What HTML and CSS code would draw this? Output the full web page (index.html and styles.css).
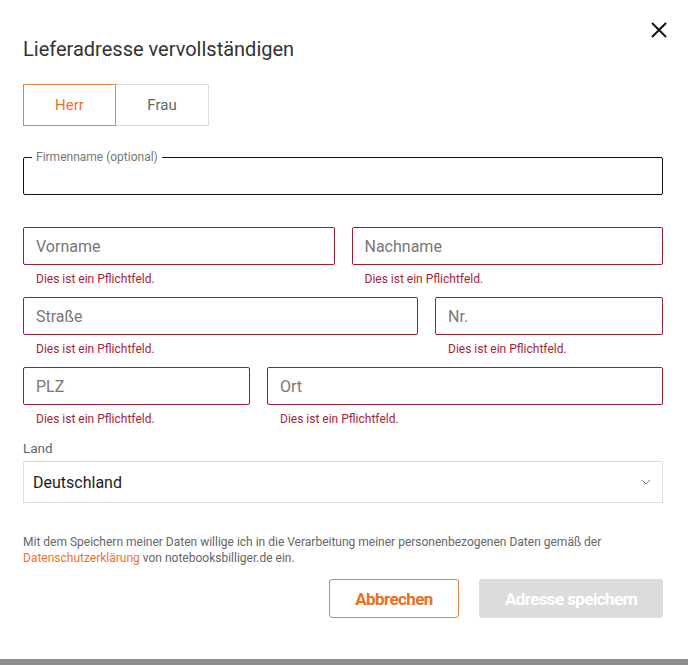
FILE: index.html
```html
<!DOCTYPE html>
<html lang="de">
<head>
    <meta charset="UTF-8">
    <title>Lieferadresse vervollständigen</title>
    <link rel="stylesheet" href="styles.css">
</head>
<body>
    <div class="modal">
        <div class="modal-head">
            <h2 class="modal-title">Lieferadresse vervollständigen</h2>
            <button class="close" type="button" aria-label="Schließen">
                <svg width="18" height="18" viewBox="0 0 18 18"><path d="M2 2L16 16M16 2L2 16" stroke="#111" stroke-width="2" fill="none"/></svg>
            </button>
        </div>

        <div class="salutation">
            <button type="button" class="sal active">Herr</button>
            <button type="button" class="sal">Frau</button>
        </div>

        <fieldset class="outlined">
            <legend>Firmenname (optional)</legend>
            <input type="text" name="company">
        </fieldset>

        <div class="row">
            <div class="field">
                <input type="text" class="invalid" placeholder="Vorname">
                <div class="error">Dies ist ein Pflichtfeld.</div>
            </div>
            <div class="field">
                <input type="text" class="invalid" placeholder="Nachname">
                <div class="error">Dies ist ein Pflichtfeld.</div>
            </div>
        </div>

        <div class="row street">
            <div class="field">
                <input type="text" class="invalid" placeholder="Straße">
                <div class="error">Dies ist ein Pflichtfeld.</div>
            </div>
            <div class="field">
                <input type="text" class="invalid" placeholder="Nr.">
                <div class="error">Dies ist ein Pflichtfeld.</div>
            </div>
        </div>

        <div class="row city">
            <div class="field">
                <input type="text" class="invalid" placeholder="PLZ">
                <div class="error">Dies ist ein Pflichtfeld.</div>
            </div>
            <div class="field">
                <input type="text" class="invalid" placeholder="Ort">
                <div class="error">Dies ist ein Pflichtfeld.</div>
            </div>
        </div>

        <label class="label" for="country">Land</label>
        <div class="select">
            <span>Deutschland</span>
            <svg width="10" height="6" viewBox="0 0 10 6"><path d="M1 1L5 5L9 1" stroke="#777" stroke-width="1" fill="none"/></svg>
        </div>

        <p class="consent">Mit dem Speichern meiner Daten willige ich in die Verarbeitung meiner personenbezogenen Daten gemäß der <a href="#">Datenschutzerklärung</a> von notebooksbilliger.de ein.</p>

        <div class="actions">
            <button type="button" class="btn btn-outline">Abbrechen</button>
            <button type="button" class="btn btn-disabled">Adresse speichern</button>
        </div>
    </div>
    <div class="bottom-bar"></div>
</body>
</html>
```

FILE: styles.css
```css
body {
    margin: 0;
    font-family: Roboto, "Liberation Sans", sans-serif;
    color: #333;
    background-color: #fff;
}
.modal {
    height: 659px;
    box-sizing: border-box;
    padding: 0 25px 0 23px;
}
.modal-head {
    display: flex;
    justify-content: space-between;
    align-items: flex-start;
}
.modal-title {
    margin: 37px 0 0 0;
    font-size: 20px;
    font-weight: 400;
    line-height: 24px;
    color: #333;
}
.close {
    margin: 21px -5px 0 0;
    padding: 0;
    border: none;
    background: none;
    cursor: pointer;
}
.salutation {
    display: flex;
    margin-top: 23px;
}
.sal {
    width: 93px;
    height: 42px;
    border: 1px solid #ddd;
    background: #fff;
    font-family: inherit;
    font-size: 15px;
    color: #666;
    cursor: pointer;
}
.sal + .sal {
    border-left: none;
}
.sal.active {
    border: 1px solid #e8843f;
    color: #e8742f;
}
.outlined {
    margin: 24px 0 0 0;
    padding: 0 12px;
    border: 1px solid #111;
    border-radius: 2px;
    box-sizing: border-box;
    height: 45px;
}
.outlined legend {
    padding: 0 4px;
    margin-left: -4px;
    font-size: 12px;
    color: #777;
    line-height: 14px;
}
.outlined input {
    border: none;
    outline: none;
    width: 100%;
    height: 28px;
    padding: 0;
    font-family: inherit;
    font-size: 16px;
}
.row {
    display: grid;
    grid-template-columns: 1fr 1fr;
    column-gap: 17px;
}
.outlined + .row {
    margin-top: 32px;
}
.row.street {
    grid-template-columns: 395px 1fr;
}
.row.city {
    grid-template-columns: 227px 1fr;
}
.field input {
    display: block;
    width: 100%;
    height: 38px;
    box-sizing: border-box;
    padding: 0 12px;
    border: 1px solid #ccc;
    border-radius: 2px;
    font-family: inherit;
    font-size: 16px;
    color: #333;
}
.field input::placeholder {
    color: #777;
}
.field input.invalid {
    border-color: #9e1c30;
}
.error {
    margin: 7px 0 11px 13px;
    font-size: 12px;
    line-height: 14px;
    color: #a3263a;
}
.label {
    display: block;
    margin-top: 3px;
    font-size: 13.5px;
    line-height: 16px;
    color: #666;
}
.select {
    display: flex;
    justify-content: space-between;
    align-items: center;
    margin-top: 5px;
    height: 42px;
    box-sizing: border-box;
    padding: 0 11px 0 9px;
    border: 1px solid #ddd;
    font-size: 16px;
    color: #222;
}
.consent {
    margin: 31px 0 0 0;
    font-size: 12px;
    line-height: 16px;
    color: #666;
}
.consent a {
    color: #e8742f;
    text-decoration: none;
}
.actions {
    display: flex;
    justify-content: flex-end;
    gap: 20px;
    margin-top: 13px;
}
.btn {
    height: 39px;
    border-radius: 3px;
    font-family: inherit;
    font-size: 17px;
    font-weight: 700;
    letter-spacing: -0.6px;
    cursor: pointer;
}
.btn-outline {
    width: 130px;
    border: 1px solid #e8843f;
    background: #fff;
    color: #e8701e;
}
.btn-disabled {
    width: 184px;
    border: none;
    background: #dcdcdc;
    color: #fff;
    cursor: default;
}
.bottom-bar {
    height: 6px;
    background: #8e8e8e;
}
```
